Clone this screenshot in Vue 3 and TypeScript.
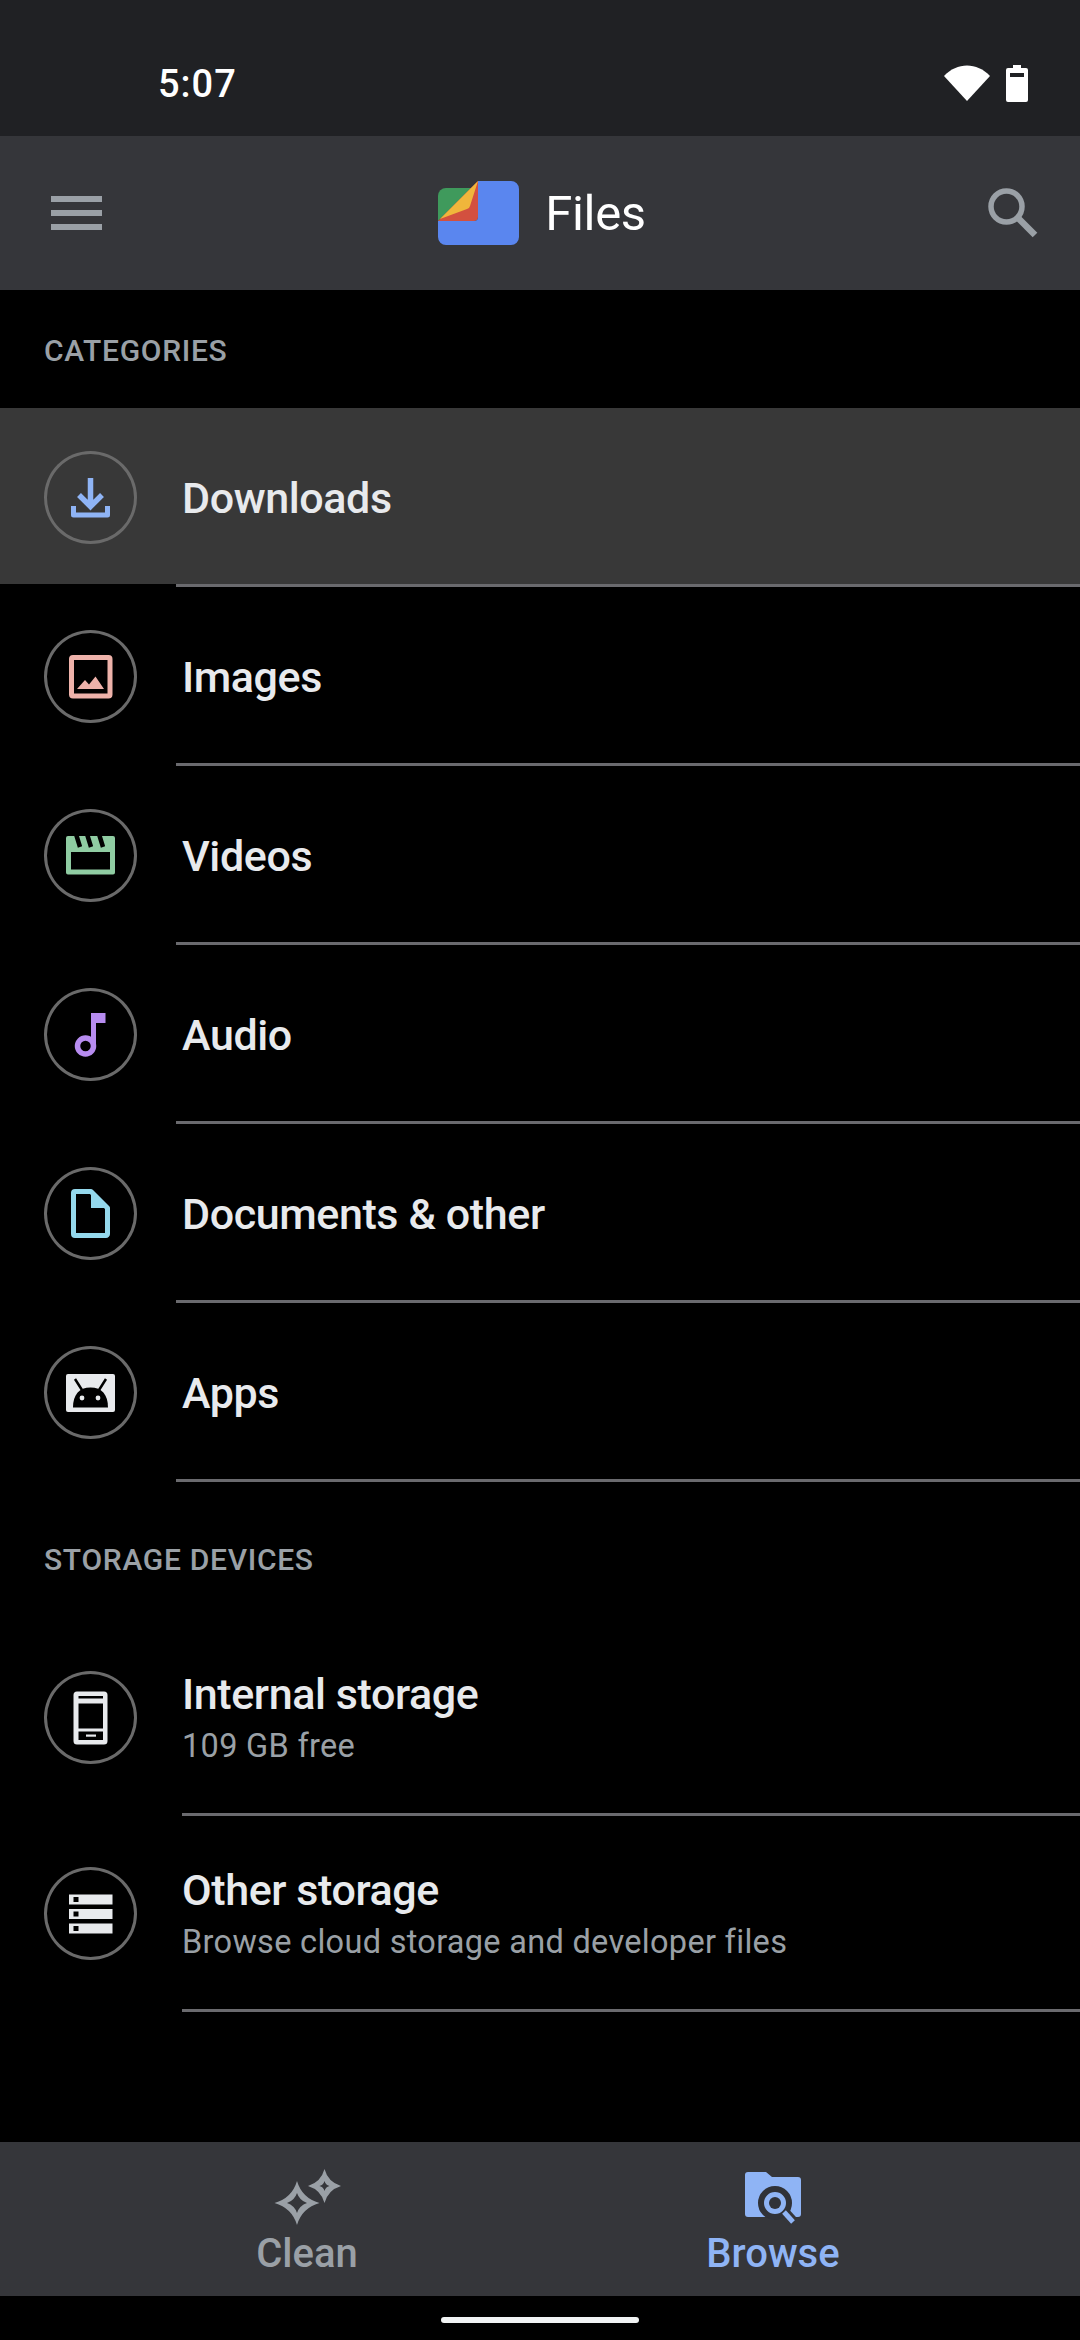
<script setup lang="ts">
const categories = [
  { name: 'Downloads', key: 'downloads', active: true },
  { name: 'Images', key: 'images', active: false },
  { name: 'Videos', key: 'videos', active: false },
  { name: 'Audio', key: 'audio', active: false },
  { name: 'Documents & other', key: 'docs', active: false },
  { name: 'Apps', key: 'apps', active: false },
]
const devices = [
  { name: 'Internal storage', sub: '109 GB free', key: 'phone' },
  { name: 'Other storage', sub: 'Browse cloud storage and developer files', key: 'server' },
]
</script>

<template>
  <div class="page">
    <div class="status">
      <span class="time">5:07</span>
      <div class="status-icons">
        <svg width="46" height="36" viewBox="0 0 46 36"><path d="M0 11 C13 -3 33 -3 46 11 L23 36 Z" fill="#fff" /></svg>
        <svg width="22" height="37" viewBox="0 0 22 37">
          <path fill-rule="evenodd" d="M7 0 H15 V3 H20 a2 2 0 0 1 2 2 V35 a2 2 0 0 1 -2 2 H2 a2 2 0 0 1 -2 -2 V5 a2 2 0 0 1 2 -2 H7 Z M4 8 V12 H18 V8 Z" fill="#fff" />
        </svg>
      </div>
    </div>

    <header class="appbar">
      <svg class="menu" width="51" height="34" viewBox="0 0 51 34" fill="#9aa0a6">
        <rect y="0" width="51" height="6" /><rect y="14" width="51" height="6" /><rect y="28" width="51" height="6" />
      </svg>
      <div class="brand">
        <svg width="81" height="64" viewBox="0 0 81 64">
          <path d="M8 7 H38 L0 40 V15 a8 8 0 0 1 8 -8 Z" fill="#3f9a5c" />
          <path d="M0 40 L40 0 V36 a4 4 0 0 1 -4 4 Z" fill="#d3503f" />
          <path d="M2 38 L40 0 L32 25 a4 4 0 0 1 -3 3 Z" fill="#f0b63b" />
          <path d="M40 0 H73 a8 8 0 0 1 8 8 V56 a8 8 0 0 1 -8 8 H8 a8 8 0 0 1 -8 -8 V40 H36 a4 4 0 0 0 4 -4 Z" fill="#5a86ef" />
        </svg>
        <span class="brand-name">Files</span>
      </div>
      <svg class="search" width="50" height="50" viewBox="0 0 50 50" fill="none" stroke="#9aa0a6">
        <circle cx="18.5" cy="18.5" r="15.5" stroke-width="5.5" />
        <path d="M30 30 L47 47" stroke-width="6.5" />
      </svg>
    </header>

    <main class="content">
      <h2 class="label first">CATEGORIES</h2>
      <section v-for="c in categories" :key="c.key">
        <div class="row" :class="{ active: c.active }">
          <div class="disc">
            <svg width="93" height="93" viewBox="0 0 93 93">
              <template v-if="c.key === 'downloads'">
                <path d="M46.5 27 V55 M35 44 L46.5 55.5 L58 44" fill="none" stroke="#8fb4f5" stroke-width="5.5" />
                <path d="M29.5 55 V64 H63.5 V55" fill="none" stroke="#8fb4f5" stroke-width="5" stroke-linejoin="round" />
              </template>
              <template v-else-if="c.key === 'images'">
                <rect x="27.5" y="27.5" width="38.5" height="38.5" rx="1.5" fill="none" stroke="#eeb2aa" stroke-width="5" />
                <path d="M33 59 L41 50 L45 54.5 L51.5 46.5 L60 59 Z" fill="#eeb2aa" />
              </template>
              <template v-else-if="c.key === 'videos'">
                <path fill-rule="evenodd" d="M24 27 H69 a2 2 0 0 1 2 2 V63.5 a2 2 0 0 1 -2 2 H24 a2 2 0 0 1 -2 -2 V29 a2 2 0 0 1 2 -2 Z M27 43 V60.5 H66 V43 Z" fill="#8fcca2" />
                <path d="M32 25 L36 38 M43 25 L47 38 M55 25 L59 38" stroke="#000" stroke-width="4.5" />
              </template>
              <template v-else-if="c.key === 'audio'">
                <circle cx="41.5" cy="58" r="8" fill="none" stroke="#b78cf0" stroke-width="5.5" />
                <path d="M47 58 V25 H61.5 V35 H52 V58 Z" fill="#b78cf0" />
              </template>
              <template v-else-if="c.key === 'docs'">
                <path d="M47 24.5 H31 a1.5 1.5 0 0 0 -1.5 1.5 V67 a1.5 1.5 0 0 0 1.5 1.5 H62 a1.5 1.5 0 0 0 1.5 -1.5 V41 Z" fill="none" stroke="#94d8ec" stroke-width="5" stroke-linejoin="round" />
                <path d="M47 24 L64 41 H47 Z" fill="#94d8ec" />
              </template>
              <template v-else>
                <path d="M24 28 H69 a2 2 0 0 1 2 2 V64 a2 2 0 0 1 -2 2 H24 a2 2 0 0 1 -2 -2 V30 a2 2 0 0 1 2 -2 Z" fill="#e8eaed" />
                <path d="M29 61.5 C29 49 35 41.5 46.5 41.5 C58 41.5 64 49 64 61.5 Z" fill="#000" />
                <path d="M31 33 L38 44 M62 33 L55 44" stroke="#000" stroke-width="2.5" />
                <circle cx="38" cy="52" r="2.4" fill="#e8eaed" /><circle cx="54" cy="52" r="2.4" fill="#e8eaed" />
              </template>
            </svg>
          </div>
          <span class="title">{{ c.name }}</span>
        </div>
        <div class="divider"></div>
      </section>

      <h2 class="label second">STORAGE DEVICES</h2>
      <section v-for="d in devices" :key="d.key">
        <div class="row device">
          <div class="disc">
            <svg width="93" height="93" viewBox="0 0 93 93">
              <template v-if="d.key === 'phone'">
                <path fill-rule="evenodd" d="M33 20.5 H60 a3.5 3.5 0 0 1 3.5 3.5 V70 a3.5 3.5 0 0 1 -3.5 3.5 H33 a3.5 3.5 0 0 1 -3.5 -3.5 V24 a3.5 3.5 0 0 1 3.5 -3.5 Z M34.5 25 V27.5 H59 V25 Z M34.5 32.5 V57.5 H59 V32.5 Z M34.5 60.5 V69 H59 V60.5 Z" fill="#e8eaed" />
                <rect x="42" y="63.5" width="10" height="2.2" fill="#e8eaed" />
              </template>
              <template v-else>
                <g fill="#e8eaed">
                  <rect x="25" y="27.5" width="43.5" height="10" /><rect x="25" y="42" width="43.5" height="10" /><rect x="25" y="56.5" width="43.5" height="10" />
                </g>
                <g fill="#000">
                  <rect x="29.5" y="30" width="5" height="5" /><rect x="29.5" y="44.5" width="5" height="5" /><rect x="29.5" y="59" width="5" height="5" />
                </g>
              </template>
            </svg>
          </div>
          <div class="texts">
            <span class="title">{{ d.name }}</span>
            <span class="sub">{{ d.sub }}</span>
          </div>
        </div>
        <div class="divider device-divider"></div>
      </section>
    </main>

    <nav class="bottom">
      <div class="tab">
        <svg width="70" height="60" viewBox="0 0 70 60" fill="#9aa0a6" fill-rule="evenodd">
          <path d="M25 13 Q30 30 47.5 35 Q30 40 25 57 Q20 40 2.5 35 Q20 30 25 13 Z M25 25 Q22.5 32.5 15 35 Q22.5 37.5 25 45 Q27.5 37.5 35 35 Q27.5 32.5 25 25 Z" />
          <path d="M52.5 1 Q56 14 69 18 Q56 22 52.5 35 Q49 22 36 18 Q49 14 52.5 1 Z M52.5 13 Q51.5 17 47.5 18 Q51.5 19 52.5 23 Q53.5 19 57.5 18 Q53.5 17 52.5 13 Z" />
        </svg>
        <span class="tab-label">Clean</span>
      </div>
      <div class="tab on">
        <svg width="70" height="60" viewBox="0 0 70 60">
          <path d="M10 4 H28 L34 9 H60 a3 3 0 0 1 3 3 V46 a3 3 0 0 1 -3 3 H10 a3 3 0 0 1 -3 -3 V7 a3 3 0 0 1 3 -3 Z" fill="#8fb4f5" />
          <path d="M45 43 L55 54" stroke="#35363a" stroke-width="11" />
          <circle cx="37" cy="35" r="14" fill="#8fb4f5" stroke="#303238" stroke-width="6" />
          <circle cx="37" cy="35" r="6" fill="#303238" />
          <path d="M46 44 L55 54" stroke="#8fb4f5" stroke-width="5" />
        </svg>
        <span class="tab-label">Browse</span>
      </div>
    </nav>

    <footer class="gesture"><span class="pill"></span></footer>
  </div>
</template>

<style scoped>
.page {
  width: 1080px;
  height: 2340px;
  background: #000;
  display: flex;
  flex-direction: column;
  font-family: Roboto, "Noto Sans", sans-serif;
  overflow: hidden;
}
.status {
  height: 136px;
  background: #202124;
  display: flex;
  justify-content: space-between;
  padding: 65px 52px 0 158px;
  box-sizing: border-box;
}
.time {
  color: #fff;
  font-size: 38px;
  font-weight: 500;
  letter-spacing: 1px;
  line-height: 38px;
}
.status-icons {
  display: flex;
  align-items: flex-start;
  gap: 16px;
}
.appbar {
  height: 154px;
  background: #35363a;
  display: flex;
  align-items: center;
  justify-content: space-between;
  padding: 0 42px 0 51px;
  box-sizing: border-box;
}
.brand {
  display: flex;
  align-items: center;
  gap: 26px;
  margin-right: 6px;
}
.brand-name {
  color: #fff;
  font-size: 49px;
  letter-spacing: -0.3px;
  line-height: 1;
}
.content {
  flex: 1;
  display: flex;
  flex-direction: column;
}
.label {
  margin: 0;
  padding-left: 44px;
  color: #9aa0a6;
  font-size: 30px;
  font-weight: 500;
  letter-spacing: 0.7px;
  display: flex;
  align-items: center;
  box-sizing: border-box;
}
.first { height: 118px; padding-top: 3px; }
.second { height: 138px; padding-top: 16px; }
.row {
  height: 176px;
  display: flex;
  align-items: center;
  padding: 2px 0 0 44px;
  box-sizing: border-box;
}
.row.active { background: #383838; }
.row.device { height: 193px; }
.disc {
  width: 93px;
  height: 93px;
  border-radius: 50%;
  box-shadow: inset 0 0 0 3px #6a6a6a;
  margin-right: 45px;
  flex: none;
}
.disc svg { display: block; }
.title {
  color: #e8eaed;
  font-size: 43px;
  font-weight: 500;
  letter-spacing: -0.4px;
  line-height: 50px;
  padding-top: 2px;
}
.texts {
  display: flex;
  flex-direction: column;
  gap: 5px;
}
.sub {
  color: #9aa0a6;
  font-size: 32.5px;
  line-height: 44px;
  letter-spacing: 0.3px;
}
.divider {
  height: 3px;
  margin-left: 176px;
  background: #6a6a6e;
}
.device-divider { margin-left: 182px; }
.bottom {
  height: 154px;
  background: #35363a;
  padding: 0 74px;
  display: grid;
  grid-template-columns: 1fr 1fr;
  box-sizing: border-box;
}
.tab {
  display: flex;
  flex-direction: column;
  align-items: center;
  padding-top: 26px;
  color: #9aa0a6;
}
.tab svg { display: block; }
.tab-label {
  font-size: 40px;
  font-weight: 500;
  line-height: 46px;
  margin-top: 3px;
}
.tab.on { color: #8fb4f5; }
.gesture {
  height: 44px;
  display: flex;
  justify-content: center;
  padding-top: 21px;
  box-sizing: border-box;
}
.pill {
  width: 198px;
  height: 6px;
  border-radius: 3px;
  background: #f1f3f4;
}
</style>
